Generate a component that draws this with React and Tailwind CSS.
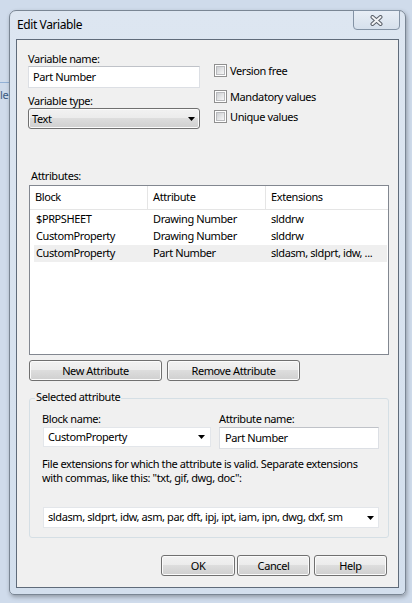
import React from "react";

const btnBase =
  "flex h-[21px] items-center rounded-[3px] border border-[#707070] bg-[linear-gradient(#f2f2f2_0%,#ebebeb_50%,#dddddd_50%,#cfcfcf_100%)] shadow-[inset_0_0_0_1px_#fbfbfb] leading-[14px]";
const btn = `${btnBase} justify-center`;

function Arrow() {
  return (
    <svg width="7" height="4" viewBox="0 0 7 4" className="shrink-0">
      <polygon points="0,0 7,0 3.5,4" fill="#000" />
    </svg>
  );
}

function Check({ label, className }) {
  return (
    <div className={`flex h-[13px] items-center gap-[3px] ${className || ""}`}>
      <div className="h-[13px] w-[13px] shrink-0 border border-[#8f8f8f] bg-white p-[1px]">
        <div className="h-full w-full border border-[#b9babd] bg-[linear-gradient(135deg,#cdcfd2,#f7f7f7)]" />
      </div>
      <span className="leading-[13px] whitespace-nowrap">{label}</span>
    </div>
  );
}

function Row({ a, b, c, selected }) {
  return (
    <div
      className={`ml-[4px] mr-[1px] flex h-[17px] items-center whitespace-nowrap ${
        selected ? "bg-[#efefef]" : ""
      }`}
    >
      <div className="w-[114px] pl-[2px]">{a}</div>
      <div className="w-[118px] pl-[5px]">{b}</div>
      <div className="flex-1 overflow-hidden pl-[5px]">{c}</div>
    </div>
  );
}

export default function App() {
  return (
    <div className="relative h-[603px] w-[412px] overflow-hidden bg-[#cfdbeb] pl-[9px] pt-[10px] font-['Noto_Sans',sans-serif] text-[11px] tracking-[-0.4px] text-black">
      <div className="absolute left-0 top-[82px] h-px w-[9px] bg-[#92b1d6]" />
      <span className="absolute left-0 top-[88px] leading-[14px] text-[#3c5a80]">le</span>

      <div className="relative flex h-[585px] w-[397px] flex-col rounded-b-[5px] rounded-t-[7px] border border-[#7a8694] bg-[linear-gradient(#dde6f1,#d3dfed)] shadow-[1px_2px_4px_rgba(0,0,0,0.3)]">
        <div className="flex h-[28px] items-center pl-[7px] text-[12px]">Edit Variable</div>

        <div className="absolute right-[5px] top-[-1px] flex h-[20px] w-[47px] items-center justify-center rounded-b-[4px] border border-[#8493a5] bg-[linear-gradient(#e8eef6,#d6e0ec)]">
          <svg width="13" height="11" viewBox="0 0 13 11">
            <path d="M2.5 2 L10.5 9 M10.5 2 L2.5 9" stroke="#5a5f68" strokeWidth="4" strokeLinecap="round" />
            <path d="M2.5 2 L10.5 9 M10.5 2 L2.5 9" stroke="#f2f3f5" strokeWidth="2" strokeLinecap="round" />
          </svg>
        </div>

        <div className="mx-[6px] h-[549px] border border-[#5f6b7a] bg-[#f0f0f0]">
          <div className="flex pt-[12px]">
            <div className="ml-[11px] flex w-[172px] flex-col">
              <div className="h-[14px] leading-[14px]">Variable name:</div>
              <div className="flex h-[22px] items-center border border-[#dcdfe4] border-t-[#bfc2c8] bg-white pl-[4px]">
                Part Number
              </div>
              <div className="mt-[6px] h-[14px] leading-[14px]">Variable type:</div>
              <div className={`${btnBase} justify-between pl-[3px] pr-[4px]`}>
                <span>Text</span>
                <Arrow />
              </div>
            </div>
            <div className="ml-[14px] mt-[12px] flex flex-col">
              <Check label="Version free" />
              <Check label="Mandatory values" className="mt-[13px]" />
              <Check label="Unique values" className="mt-[7px]" />
            </div>
          </div>

          <div className="ml-[14px] mt-[40px] h-[14px] leading-[14px]">Attributes:</div>
          <div className="ml-[12px] mt-[2px] h-[170px] w-[360px] border border-[#828790] bg-white">
            <div className="flex h-[24px] border-b border-[#e5e5e5] whitespace-nowrap">
              <div className="flex w-[118px] items-center border-r border-[#e5e5e5] pl-[5px]">Block</div>
              <div className="flex w-[118px] items-center border-r border-[#e5e5e5] pl-[5px]">Attribute</div>
              <div className="flex flex-1 items-center pl-[5px]">Extensions</div>
            </div>
            <div className="mt-[1px]">
              <Row a="$PRPSHEET" b="Drawing Number" c="slddrw" />
              <Row a="CustomProperty" b="Drawing Number" c="slddrw" />
              <Row a="CustomProperty" b="Part Number" c="sldasm, sldprt, idw, ..." selected />
            </div>
          </div>

          <div className="ml-[12px] mt-[5px] flex gap-[5px]">
            <div className={`${btn} w-[133px]`}>New Attribute</div>
            <div className={`${btn} w-[133px]`}>Remove Attribute</div>
          </div>

          <div className="relative ml-[12px] mt-[17px] h-[140px] w-[360px] rounded-[3px] border border-[#d5dfe5]">
            <span className="absolute left-[5px] top-[-9px] bg-[#f0f0f0] px-[1px] leading-[14px]">
              Selected attribute
            </span>
            <div className="flex pl-[12px] pt-[13px]">
              <div className="flex w-[169px] flex-col">
                <div className="h-[14px] leading-[14px]">Block name:</div>
                <div className="ml-[1px] mt-[1px] flex h-[20px] items-center justify-between border border-[#e3e6ea] bg-white pl-[4px] pr-[5px]">
                  <span>CustomProperty</span>
                  <Arrow />
                </div>
              </div>
              <div className="ml-[8px] flex w-[160px] flex-col">
                <div className="h-[14px] leading-[14px]">Attribute name:</div>
                <div className="mt-[1px] flex h-[22px] items-center border border-[#dcdfe4] border-t-[#bfc2c8] bg-white pl-[5px]">
                  Part Number
                </div>
              </div>
            </div>
            <div className="mt-[8px] flex flex-col pl-[12px] whitespace-nowrap">
              <span className="h-[13px] leading-[14px]">
                File extensions for which the attribute is valid. Separate extensions
              </span>
              <span className="mt-px h-[13px] leading-[14px]">with commas, like this: "txt, gif, dwg, doc":</span>
            </div>
            <div className="ml-[13px] mt-[23px] flex h-[21px] w-[336px] items-center justify-between border border-[#e3e6ea] bg-white pl-[4px] pr-[4px]">
              <span className="overflow-hidden whitespace-nowrap">
                sldasm, sldprt, idw, asm, par, dft, ipj, ipt, iam, ipn, dwg, dxf, sm
              </span>
              <Arrow />
            </div>
          </div>

          <div className="mt-[17px] flex justify-end pr-[11px]">
            <div className={`${btn} mr-[2px] w-[74px]`}>OK</div>
            <div className={`${btn} mr-[4px] w-[73px]`}>Cancel</div>
            <div className={`${btn} w-[73px]`}>Help</div>
          </div>
        </div>
      </div>
    </div>
  );
}
